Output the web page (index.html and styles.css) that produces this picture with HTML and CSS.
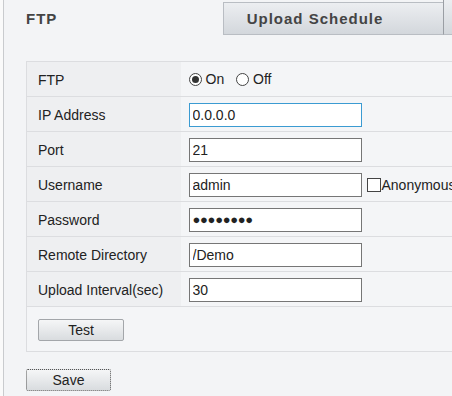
FILE: index.html
```html
<!DOCTYPE html>
<html lang="en">

<head>
    <meta charset="UTF-8" />
    <meta name="viewport" content="width=device-width, initial-scale=1.0" />
    <title>FTP Settings</title>
    <link rel="stylesheet" href="styles.css">
</head>

<body>
    <div class="frame">
        <div class="tabs">
            <div class="tab active">FTP</div>
            <div class="tab">Upload Schedule</div>
            <div class="tab next"></div>
        </div>

        <div class="content">
            <table class="form">
                <tr>
                    <td class="label">FTP</td>
                    <td class="value">
                        <label class="radio"><span class="dot checked"></span>On</label>
                        <label class="radio"><span class="dot"></span>Off</label>
                    </td>
                </tr>
                <tr>
                    <td class="label">IP Address</td>
                    <td class="value"><input class="field focus" type="text" value="0.0.0.0"></td>
                </tr>
                <tr>
                    <td class="label">Port</td>
                    <td class="value"><input class="field" type="text" value="21"></td>
                </tr>
                <tr>
                    <td class="label">Username</td>
                    <td class="value">
                        <input class="field" type="text" value="admin"><label class="check"><span class="box"></span>Anonymous</label>
                    </td>
                </tr>
                <tr>
                    <td class="label">Password</td>
                    <td class="value"><span class="field pass">&#9679;&#9679;&#9679;&#9679;&#9679;&#9679;&#9679;&#9679;</span></td>
                </tr>
                <tr>
                    <td class="label">Remote Directory</td>
                    <td class="value"><input class="field" type="text" value="/Demo"></td>
                </tr>
                <tr>
                    <td class="label">Upload Interval(sec)</td>
                    <td class="value"><input class="field" type="text" value="30"></td>
                </tr>
                <tr>
                    <td class="actions" colspan="2"><button class="btn">Test</button></td>
                </tr>
            </table>

            <button class="btn save">Save</button>
        </div>
    </div>
</body>

</html>
```

FILE: styles.css
```css
* {
    margin: 0;
    padding: 0;
    box-sizing: border-box;
}

html,
body {
    height: 100%;
    overflow: hidden;
}

body {
    font-family: 'Liberation Sans', Arial, sans-serif;
    font-size: 14px;
    color: #222;
    background: #fafafa;
    padding-left: 3px;
}

.frame {
    height: 100%;
    width: 520px;
    background: #f3f4f6;
    border-left: 1px solid #c9cbce;
}

.tabs {
    display: flex;
    height: 35px;
    padding-top: 2px;
}

.tab {
    width: 222px;
    padding-left: 23px;
    line-height: 32px;
    font-weight: bold;
    font-size: 15px;
    letter-spacing: 1px;
    color: #444;
    border: 1px solid #b9bdc3;
    border-right: none;
    background: linear-gradient(#eceef1, #d3d7dc);
}

.tab.active {
    width: 220px;
    padding-left: 22px;
    border: none;
    background: transparent;
    margin-top: -2px;
    line-height: 37px;
}

.tab.next {
    width: 80px;
    border-left: 1px solid #9a9ea4;
    margin-top: -2px;
    border-top: none;
}

.content {
    padding: 26px 0 0 22px;
}

.form {
    width: 470px;
    border-collapse: collapse;
    border: 1px solid #dcdde0;
    border-right: none;
}

.form td {
    height: 35px;
    padding-top: 2px;
    border-top: 1px solid #dcdde0;
    vertical-align: middle;
}

.label {
    width: 154px;
    padding-left: 11px;
    background: #eeeff1;
}

.value {
    padding-left: 8px;
    background: #f4f5f7;
}

.field {
    display: inline-block;
    vertical-align: middle;
    width: 173px;
    height: 24px;
    padding: 0 3px;
    border: 1px solid #767676;
    background: #fff;
    font-family: inherit;
    font-size: 14px;
    color: #222;
    outline: none;
}

.field.focus {
    border-color: #3b9bd2;
}

.pass {
    line-height: 22px;
    font-size: 13px;
    letter-spacing: -0.3px;
    color: #222;
}

.radio {
    display: inline-flex;
    align-items: center;
    margin-right: 8px;
}

.dot {
    width: 13px;
    height: 13px;
    border: 1px solid #444;
    border-radius: 50%;
    margin-right: 4px;
    background: #fff;
    position: relative;
}

.dot.checked::after {
    content: "";
    position: absolute;
    left: 2px;
    top: 2px;
    width: 7px;
    height: 7px;
    border-radius: 50%;
    background: #333;
}

.check {
    display: inline-flex;
    align-items: center;
    vertical-align: middle;
    margin-left: 5px;
}

.box {
    width: 14px;
    height: 14px;
    border: 1px solid #444;
    background: #fff;
    margin-right: 1px;
}

.form .actions {
    height: 45px;
    padding-left: 11px;
    background: #f4f5f7;
}

.btn {
    width: 86px;
    height: 22px;
    font-family: inherit;
    font-size: 14px;
    color: #222;
    border: 1px solid #a3a6aa;
    border-radius: 2px;
    background: linear-gradient(#f5f6f7, #d9dcdf);
    cursor: pointer;
}

.save {
    display: block;
    width: 85px;
    margin-top: 17px;
    border: 1px dotted #555;
}
```
